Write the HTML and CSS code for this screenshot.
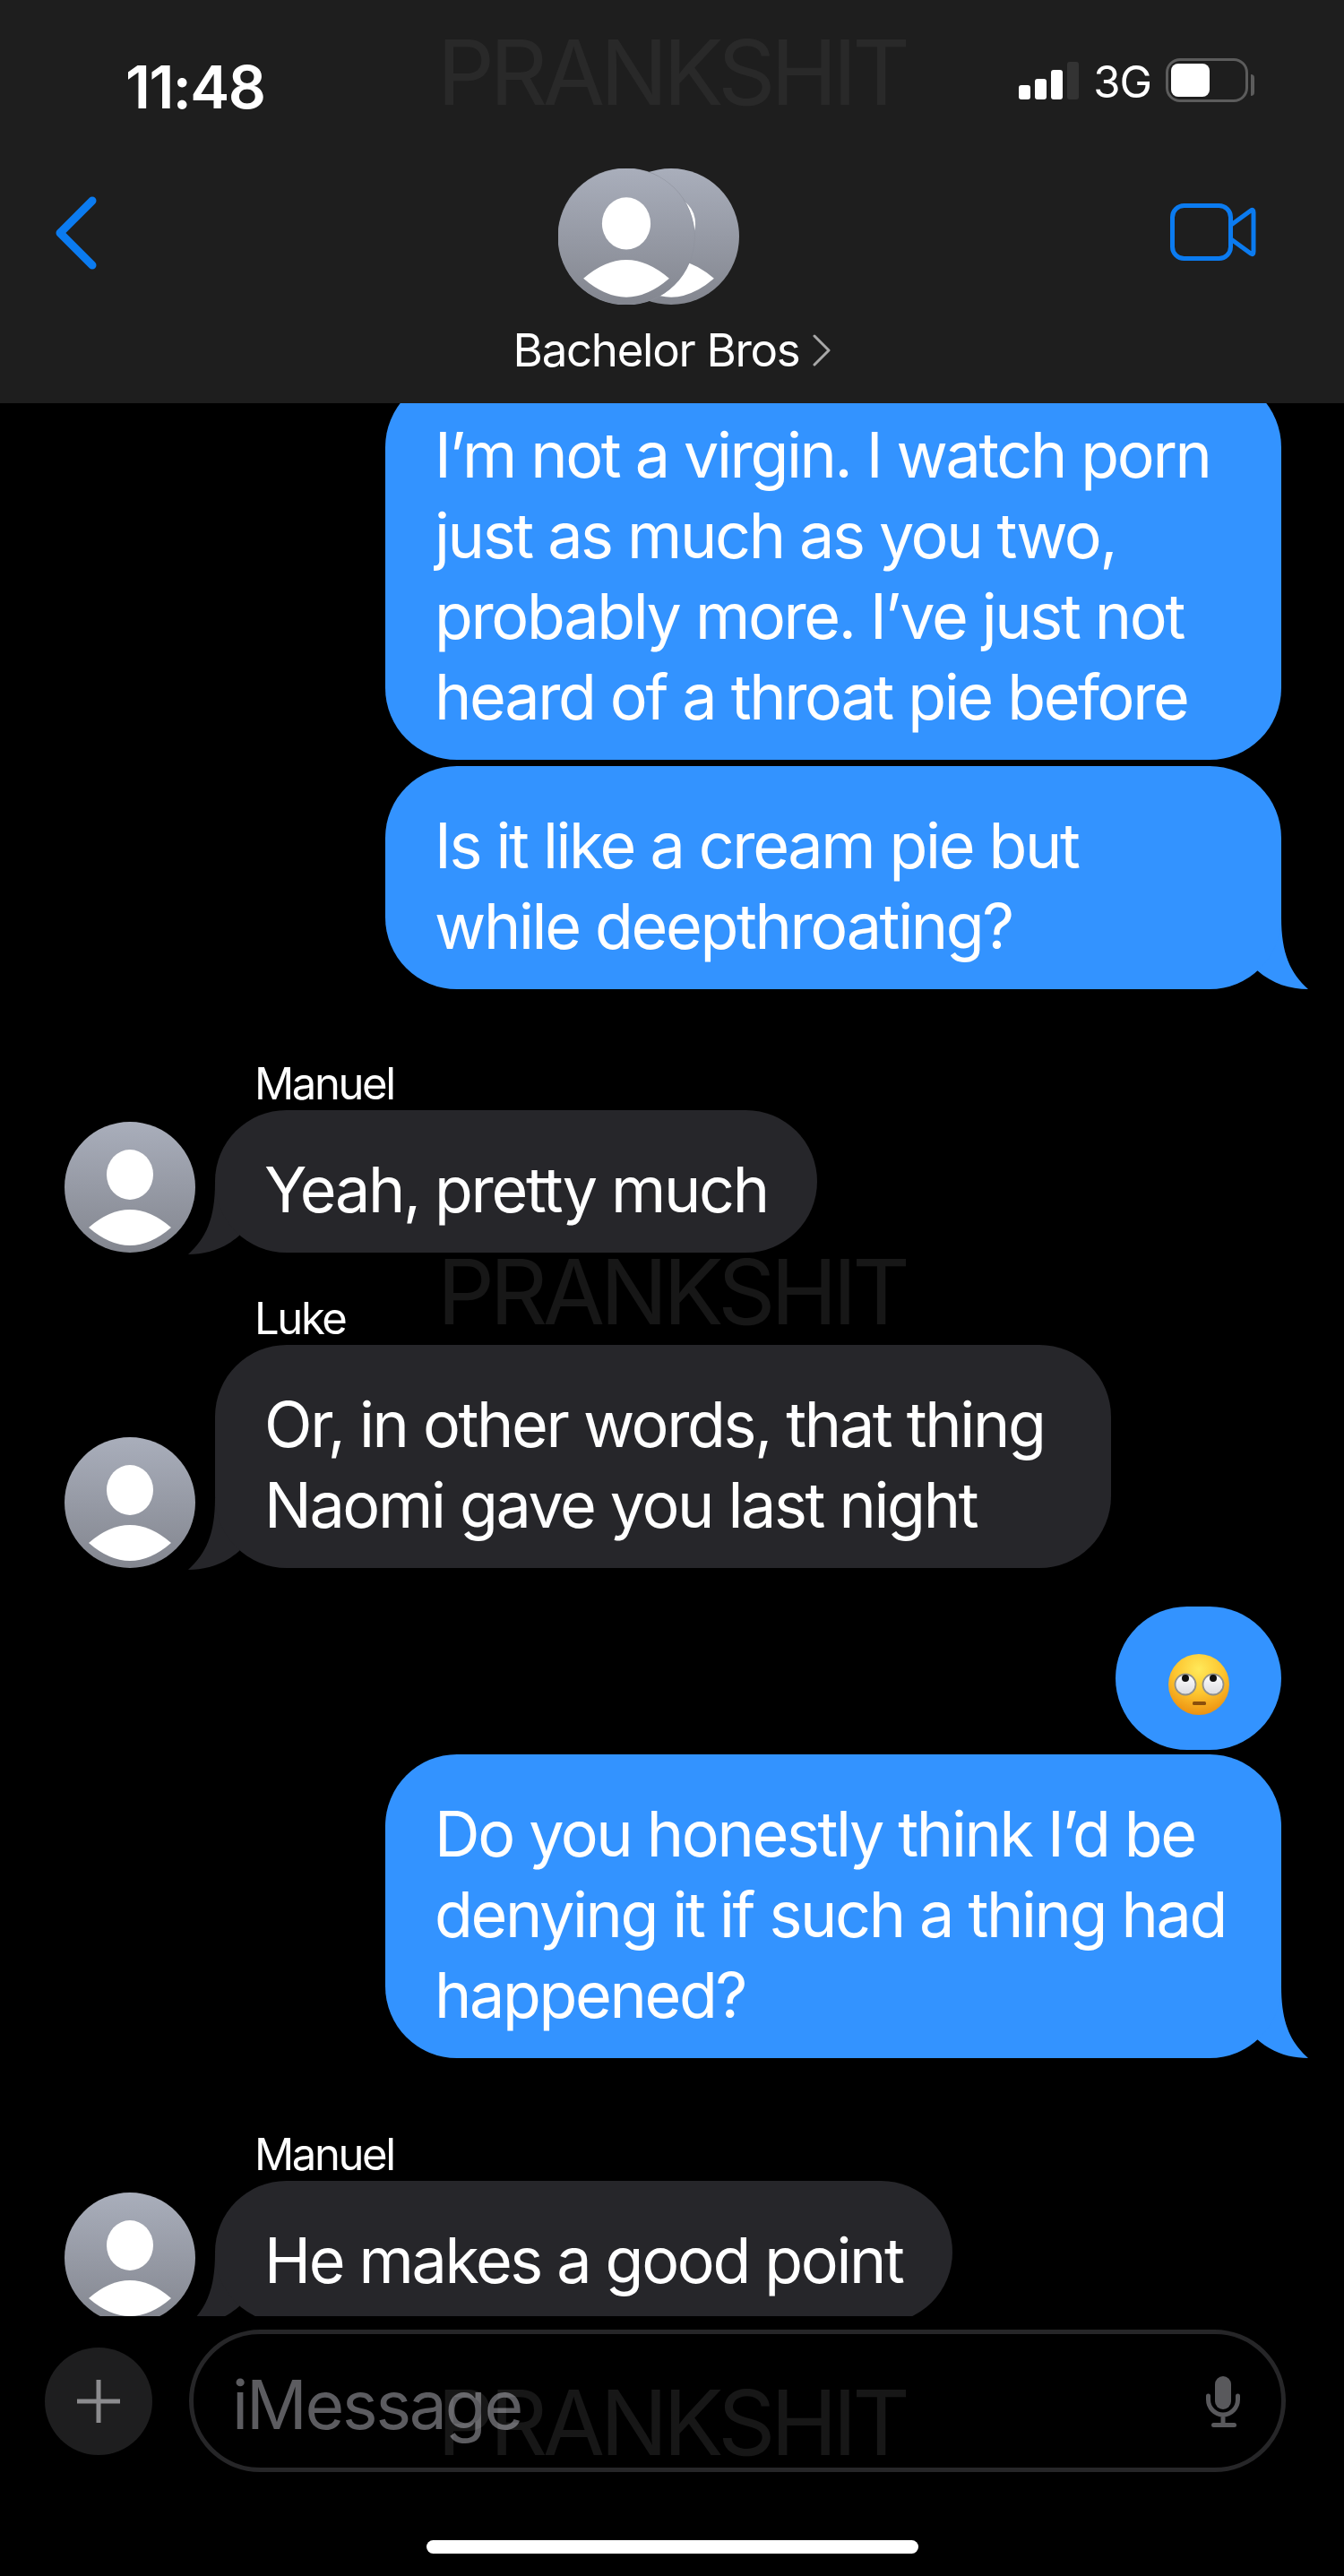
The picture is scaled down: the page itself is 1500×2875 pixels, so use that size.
FILE: index.html
```html
<!DOCTYPE html>
<html lang="en">
  <head>
    <meta charset="UTF-8" />
    <meta name="viewport" content="width=device-width, initial-scale=1.0" />
    <title>Bachelor Bros</title>
    <link rel="stylesheet" href="styles.css">
  </head>
  <body>
    <svg class="defs" width="0" height="0">
      <defs>
        <linearGradient id="avatarFill" x1="0" y1="0" x2="0" y2="1">
          <stop offset="0" stop-color="#a9aebb" />
          <stop offset="1" stop-color="#83868f" />
        </linearGradient>
        <radialGradient id="emojiFill" cx="0.5" cy="0.25" r="0.8">
          <stop offset="0" stop-color="#ffe95a" />
          <stop offset="0.5" stop-color="#fdc52f" />
          <stop offset="1" stop-color="#ea8a0c" />
        </radialGradient>
        <linearGradient id="eyeFill" x1="0" y1="0" x2="0" y2="1">
          <stop offset="0" stop-color="#ffffff" />
          <stop offset="1" stop-color="#dcdce0" />
        </linearGradient>
        <symbol id="person" viewBox="0 0 146 146">
          <circle cx="73" cy="73" r="73" fill="url(#avatarFill)" />
          <ellipse cx="73" cy="59" rx="26" ry="28" fill="#fff" />
          <path d="M27 118 Q73 78 119 118 Q73 158 27 118 Z" fill="#fff" />
        </symbol>
        <symbol id="tail" viewBox="0 0 100 80">
          <path d="M70 0 C70 40 80 62 100 80 C80 80 60 74 43 59 L0 0 Z" />
        </symbol>
      </defs>
    </svg>

    <div class="phone">
      <header class="topbar">
        <div class="status">
          <span class="clock">11:48</span>
          <div class="status-right">
            <div class="signal">
              <i class="bar bar-1"></i>
              <i class="bar bar-2"></i>
              <i class="bar bar-3"></i>
              <i class="bar bar-4"></i>
            </div>
            <span class="network">3G</span>
            <div class="battery"><i class="charge"></i></div>
            <i class="battery-nub"></i>
          </div>
        </div>
        <div class="nav">
          <svg class="back" width="50" height="84" viewBox="0 0 50 84">
            <path d="M45 6 L9 42 L45 78" />
          </svg>
          <div class="contact">
            <svg class="group-pic" width="202" height="152" viewBox="0 0 202 152">
              <use href="#person" x="50" y="0" width="152" height="152" />
              <circle cx="76" cy="76" r="76.5" fill="#8d919c" />
              <use href="#person" x="0" y="0" width="152" height="152" />
            </svg>
            <div class="contact-name">
              <span>Bachelor Bros</span>
              <svg width="20" height="36" viewBox="0 0 20 36">
                <path d="M2 2 L18 18 L2 34" />
              </svg>
            </div>
          </div>
          <svg class="video" width="96" height="64" viewBox="0 0 96 64">
            <rect x="2.5" y="2.5" width="65" height="59" rx="13" />
            <path d="M68 24 L90 8 Q93 6 93 10 V54 Q93 58 90 56 L68 40" />
          </svg>
        </div>
      </header>

      <main class="thread">
        <div class="bubble sent first">I’m not a virgin. I watch porn<br>just as much as you two,<br>probably more. I’ve just not<br>heard of a throat pie before</div>
        <div class="bubble sent follow">
          Is it like a cream pie but<br>while deepthroating?
          <svg class="tail"><use href="#tail" /></svg>
        </div>

        <div class="sender">Manuel</div>
        <div class="row">
          <svg class="avatar"><use href="#person" /></svg>
          <div class="bubble received">
            Yeah, pretty much
            <svg class="tail"><use href="#tail" /></svg>
          </div>
        </div>

        <div class="sender second">Luke</div>
        <div class="row">
          <svg class="avatar"><use href="#person" /></svg>
          <div class="bubble received wide">
            Or, in other words, that thing<br>Naomi gave you last night
            <svg class="tail"><use href="#tail" /></svg>
          </div>
        </div>

        <div class="bubble sent emoji-only">
          <svg width="68" height="68" viewBox="0 0 68 68">
            <circle cx="34" cy="34" r="34" fill="url(#emojiFill)" />
            <circle cx="19" cy="34" r="11.5" fill="url(#eyeFill)" stroke="#8f8f8a" stroke-width="1.8" />
            <circle cx="50" cy="34" r="11.5" fill="url(#eyeFill)" stroke="#8f8f8a" stroke-width="1.8" />
            <circle cx="19" cy="27" r="4" fill="#111" />
            <circle cx="50" cy="27" r="4" fill="#111" />
            <rect x="27" y="53" width="15" height="4" rx="1.5" fill="#8a4f0c" />
          </svg>
        </div>
        <div class="bubble sent tight">
          Do you honestly think I’d be<br>denying it if such a thing had<br>happened?
          <svg class="tail"><use href="#tail" /></svg>
        </div>

        <div class="sender third">Manuel</div>
        <div class="row">
          <svg class="avatar"><use href="#person" /></svg>
          <div class="bubble received">
            He makes a good point
            <svg class="tail"><use href="#tail" /></svg>
          </div>
        </div>
      </main>

      <footer class="composer">
        <div class="plus">
          <svg width="48" height="48" viewBox="0 0 48 48">
            <path d="M24 0 V48 M0 24 H48" />
          </svg>
        </div>
        <div class="input">
          <span>iMessage</span>
          <svg width="42" height="58" viewBox="0 0 42 58">
            <rect x="12" y="1" width="18" height="37" rx="9" />
            <path class="mic-arc" d="M4.5 23 V27 A16.5 17 0 0 0 37.5 27 V23 M21 44 V54" />
            <rect x="8" y="53" width="28" height="5" rx="2.5" />
          </svg>
        </div>
      </footer>
      <div class="home-bar"></div>

      <div class="watermark mark-top">PRANKSHIT</div>
      <div class="watermark mark-mid">PRANKSHIT</div>
      <div class="watermark mark-low">PRANKSHIT</div>
    </div>
  </body>
</html>
```

FILE: styles.css
```css
* {
  margin: 0;
  padding: 0;
  box-sizing: border-box;
}

body {
  background: #000;
  font-family: "Inter", "Liberation Sans", sans-serif;
  color: #fff;
}

.defs {
  position: absolute;
}

.phone {
  position: relative;
  width: 1500px;
  height: 2875px;
  overflow: hidden;
  display: flex;
  flex-direction: column;
}

/* top bar */
.topbar {
  height: 450px;
  flex: none;
  background: #1e1e1e;
  position: relative;
  z-index: 2;
}

.status {
  height: 188px;
  padding: 62px 100px 0 140px;
  display: flex;
  justify-content: space-between;
  align-items: flex-start;
}

.clock {
  font-size: 66px;
  line-height: 70px;
  font-weight: 600;
  letter-spacing: -1.5px;
}

.status-right {
  display: flex;
  align-items: flex-start;
}

.signal {
  display: flex;
  align-items: flex-end;
  gap: 5px;
  height: 42px;
  margin-top: 7px;
}

.bar {
  display: block;
  width: 13px;
  border-radius: 3px;
  background: #fff;
}

.bar-1 { height: 16px; }
.bar-2 { height: 23px; }
.bar-3 { height: 33px; }
.bar-4 { height: 42px; background: #333; }

.network {
  font-size: 49px;
  line-height: 56px;
  margin: 2px 16px 0;
  letter-spacing: -1px;
}

.battery {
  width: 92px;
  height: 49px;
  margin-top: 3px;
  border: 3px solid #5c5c5c;
  border-radius: 16px;
  padding: 3px;
}

.charge {
  display: block;
  width: 43px;
  height: 37px;
  border-radius: 8px;
  background: #fff;
}

.battery-nub {
  display: block;
  width: 4px;
  height: 24px;
  margin: 21px 0 0 3px;
  border-radius: 0 6px 6px 0;
  background: #5c5c5c;
}

.nav {
  display: flex;
  justify-content: space-between;
  align-items: flex-start;
  padding: 0 98px 0 58px;
}

.back {
  margin-top: 30px;
}

.back path {
  fill: none;
  stroke: #0b7bf0;
  stroke-width: 9;
  stroke-linecap: round;
  stroke-linejoin: round;
}

.contact {
  display: flex;
  flex-direction: column;
  align-items: flex-start;
  margin-left: 86px;
}

.group-pic {
  margin-left: 50px;
}

.contact-name {
  display: flex;
  align-items: center;
  gap: 15px;
  margin-top: 20px;
  font-size: 51px;
  line-height: 62px;
  letter-spacing: -1.3px;
}

.contact-name path {
  fill: none;
  stroke: #a8a8a8;
  stroke-width: 3;
  stroke-linecap: round;
  stroke-linejoin: round;
}

.video {
  margin-top: 39px;
}

.video rect,
.video path {
  fill: none;
  stroke: #0b7bf0;
  stroke-width: 5;
  stroke-linejoin: round;
}

/* messages */
.thread {
  height: 2135px;
  flex: none;
  overflow: hidden;
  display: flex;
  flex-direction: column;
  align-items: flex-start;
}

.thread > * {
  flex: none;
}

.bubble {
  position: relative;
  padding: 44px 55px 25px;
  font-size: 70px;
  line-height: 90px;
  letter-spacing: -2.35px;
  border-radius: 80px;
  white-space: nowrap;
}

.sent {
  align-self: flex-end;
  margin-right: 70px;
  min-width: 1000px;
  background: #3393ff;
}

.first {
  margin-top: -31px;
}

.follow {
  margin-top: 7px;
}

.tight {
  margin-top: 5px;
}

.received {
  margin-left: 22px;
  background: #26262a;
}

.wide {
  padding-right: 74px;
}

.tail {
  position: absolute;
  z-index: -1;
  width: 100px;
  height: 80px;
  bottom: 0;
  fill: #3393ff;
}

.sent .tail {
  right: -30px;
}

.received .tail {
  left: -30px;
  bottom: -2px;
  transform: scaleX(-1);
  fill: #26262a;
}

.emoji-only {
  min-width: 0;
  width: 185px;
  height: 160px;
  margin-top: 43px;
  padding: 0;
  display: flex;
  justify-content: center;
  align-items: center;
}

.emoji-only svg {
  margin-top: 14px;
}

.sender {
  margin: 78px 0 1px 284px;
  font-size: 49px;
  line-height: 56px;
  letter-spacing: -2.4px;
}

.sender.second {
  margin-top: 46px;
}

.sender.third {
  margin-top: 80px;
}

.row {
  display: flex;
  align-items: flex-end;
  padding-left: 72px;
}

.avatar {
  width: 146px;
  height: 146px;
  flex: none;
}

/* input bar */
.composer {
  display: flex;
  align-items: center;
  gap: 41px;
  padding: 15px 65px 0 50px;
}

.plus {
  width: 120px;
  height: 120px;
  flex: none;
  border-radius: 50%;
  background: #1e1e1f;
  display: flex;
  justify-content: center;
  align-items: center;
}

.plus path {
  stroke: #8b8b8e;
  stroke-width: 5;
  stroke-linecap: round;
}

.input {
  flex: 1;
  height: 159px;
  border: 5px solid #262628;
  border-radius: 80px;
  padding: 0 44px 0 43px;
  display: flex;
  justify-content: space-between;
  align-items: center;
  font-size: 75px;
  letter-spacing: -2.2px;
  color: #5c5c60;
}

.input span {
  margin-top: 8px;
}

.input rect {
  fill: #59595c;
}

.mic-arc {
  fill: none;
  stroke: #59595c;
  stroke-width: 5;
  stroke-linecap: round;
}

.home-bar {
  width: 549px;
  height: 15px;
  margin: 76px auto 0;
  border-radius: 8px;
  background: #fff;
}

/* watermark lies over everything */
.watermark {
  position: absolute;
  left: 488px;
  z-index: 3;
  font-size: 100px;
  line-height: 100px;
  letter-spacing: -5.1px;
  color: rgba(255, 255, 255, 0.09);
  pointer-events: none;
}

.mark-top {
  top: 31px;
  color: rgba(255, 255, 255, 0.05);
}

.mark-mid { top: 1392px; }
.mark-low { top: 2654px; }
```
